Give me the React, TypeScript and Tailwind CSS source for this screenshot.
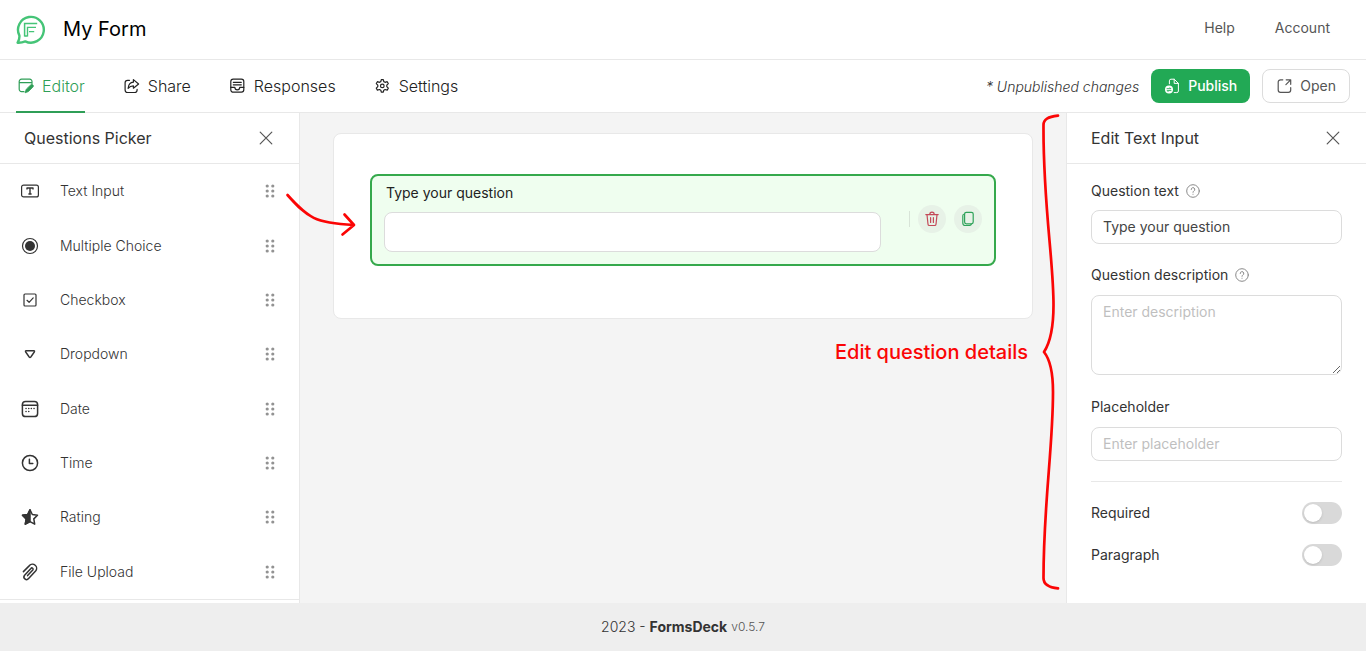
import { ReactNode } from "react";

type IconProps = { children: ReactNode; size?: 16 | 20; className?: string };

function Icon({ children, size = 16, className = "" }: IconProps) {
  return (
    <svg
      width={size}
      height={size}
      viewBox={`0 0 ${size} ${size}`}
      fill="none"
      stroke="currentColor"
      strokeWidth="1.2"
      strokeLinecap="round"
      strokeLinejoin="round"
      className={`shrink-0 ${className}`}
      aria-hidden="true"
    >
      {children}
    </svg>
  );
}

function Logo() {
  return (
    <svg width="30" height="30" viewBox="0 0 30 30" fill="none" stroke="#45c477" aria-hidden="true" className="shrink-0">
      <path d="M3.4 20.6 A12.9 12.9 0 1 1 9.3 26.4 Q5.6 27.9 1.6 27.7 Q3.7 24.6 3.4 20.6 Z" strokeWidth="2.4" strokeLinejoin="round" />
      <path d="M8.6 21.6 V8.6 H21.2" strokeWidth="1.5" />
      <path d="M11.5 21.6 V12.4 H20 M13 16.6 H18.2 M8.6 21 H11.5" strokeWidth="1.4" />
    </svg>
  );
}

const tabs = [
  {
    label: "Editor",
    active: true,
    icon: (
      <>
        <path d="M6 13.6 H3.5 A2.3 2.3 0 0 1 1.2 11.3 V3.5 A2.3 2.3 0 0 1 3.5 1.2 H11.7 A2.3 2.3 0 0 1 14 3.5 V5.4 M1.2 4.7 H14" />
        <path d="M12.7 6.9 A1.5 1.5 0 0 1 14.9 9.1 L10.4 13.6 L7 14.8 L8.2 11.4 Z" fill="currentColor" strokeWidth="0.8" />
      </>
    ),
  },
  {
    label: "Share",
    active: false,
    icon: (
      <>
        <path d="M5.5 2.3 H3.6 A2.5 2.5 0 0 0 1.1 4.8 V12 A2.5 2.5 0 0 0 3.6 14.5 H10.6 A2.5 2.5 0 0 0 13.1 12 V11.4" />
        <path d="M9.4 1.6 L14.6 6 L9.4 10.2 V7.9 C6.8 7.9 5.4 8.8 4.1 10.4 C4.4 6.8 6.2 4.5 9.4 4.2 Z" />
      </>
    ),
  },
  {
    label: "Responses",
    active: false,
    icon: (
      <>
        <rect x="0.8" y="1.2" width="13" height="13" rx="2.4" />
        <path d="M3.3 4.3 H11.3 M3.3 6.8 H11.3 M0.8 9.4 H4.9 A2.4 2.4 0 0 0 9.7 9.4 H13.8" />
      </>
    ),
  },
  {
    label: "Settings",
    active: false,
    icon: (
      <>
        <path d="M6.3 1.6 H8.3 L8.8 3.6 L10.1 4.3 L12.2 3.7 L13.3 5.6 L11.8 7.2 V8.6 L13.3 10.2 L12.2 12.1 L10.1 11.5 L8.8 12.2 L8.3 14.2 H6.3 L5.8 12.2 L4.5 11.5 L2.4 12.1 L1.3 10.2 L2.8 8.6 V7.2 L1.3 5.6 L2.4 3.7 L4.5 4.3 L5.8 3.6 Z" />
        <circle cx="7.3" cy="7.9" r="1.8" />
      </>
    ),
  },
];

const questionTypes = [
  {
    label: "Text Input",
    icon: (
      <>
        <rect x="1.6" y="4.1" width="16.8" height="11.8" rx="2" />
        <path d="M7 8.6 V7 H13 V8.6 M10 7 V13 M8.4 13 H11.6" strokeWidth="1.4" strokeLinecap="butt" />
      </>
    ),
  },
  {
    label: "Multiple Choice",
    icon: (
      <>
        <circle cx="10" cy="10" r="7.5" />
        <circle cx="10" cy="10" r="5" fill="currentColor" stroke="none" />
      </>
    ),
  },
  {
    label: "Checkbox",
    icon: (
      <>
        <rect x="4" y="4" width="12" height="12" rx="1" />
        <path d="M7 10.3 L9.1 12.3 L13.2 7.9" />
      </>
    ),
  },
  {
    label: "Dropdown",
    icon: <path d="M6.2 6.7 H13.8 Q15 6.9 14.3 8 L10.8 13 Q10 13.9 9.2 13 L5.7 8 Q5 6.9 6.2 6.7 Z" strokeWidth="1.4" />,
  },
  {
    label: "Date",
    icon: (
      <>
        <rect x="2.4" y="2.4" width="15.2" height="15.2" rx="3.2" strokeWidth="1.5" />
        <path d="M2.4 6.2 H17.6" strokeWidth="1.5" />
        <path d="M6 9.5 H6.1 M8.7 9.5 H8.8 M11.3 9.5 H11.4 M14 9.5 H14.1 M6 12.4 H6.1 M8.7 12.4 H8.8" strokeWidth="1.5" />
      </>
    ),
  },
  {
    label: "Time",
    icon: (
      <>
        <circle cx="10" cy="10" r="7.6" strokeWidth="1.5" />
        <path d="M9.4 6.2 V10.6 H12.8" strokeWidth="1.5" />
      </>
    ),
  },
  {
    label: "Rating",
    icon: (
      <>
        <path d="M10 2.8 L12.3 7.5 L17.5 8.2 L13.8 11.9 L14.7 17.2 L10 14.7 L5.3 17.2 L6.2 11.9 L2.5 8.2 L7.7 7.5 Z" strokeWidth="1.5" />
        <path d="M10 2.8 L7.7 7.5 L2.5 8.2 L6.2 11.9 L5.3 17.2 L10 14.7 Z" fill="currentColor" strokeWidth="1.5" />
      </>
    ),
  },
  {
    label: "File Upload",
    icon: (
      <path
        d="M3.4 9.6 L9.4 3.6 A4 4 0 0 1 15.6 9 L8.6 16.6 A2.6 2.6 0 0 1 4.6 13.2 L10.9 6.4 A1.2 1.2 0 0 1 12.8 8 L7.6 13.6"
        strokeWidth="1.5"
      />
    ),
  },
];

function CloseButton({ label }: { label: string }) {
  return (
    <button type="button" aria-label={label} className="flex size-5 items-center justify-center text-[#555]">
      <Icon>
        <path d="M2.2 2.2 L13.8 13.8 M13.8 2.2 L2.2 13.8" />
      </Icon>
    </button>
  );
}

function DragHandle() {
  return (
    <svg width="10" height="14" viewBox="0 0 10 14" fill="#929292" aria-hidden="true">
      {[2, 7, 12].map((y) => (
        <g key={y}>
          <circle cx="2.2" cy={y} r="1.6" />
          <circle cx="7.8" cy={y} r="1.6" />
        </g>
      ))}
    </svg>
  );
}

function HelpMark() {
  return (
    <svg width="14" height="14" viewBox="0 0 14 14" fill="none" stroke="#8a8a8a" strokeLinecap="round" aria-hidden="true">
      <circle cx="7" cy="7" r="6.3" strokeWidth="1" />
      <path d="M5.2 5.5 A1.8 1.8 0 1 1 7.7 7.1 Q7 7.5 7 8.3 M7 10.2 V10.3" strokeWidth="1" />
    </svg>
  );
}

function Toggle({ id, label }: { id: string; label: string }) {
  return (
    <div className="flex items-center justify-between">
      <label htmlFor={id} className="text-sm leading-5 text-[#333]">{label}</label>
      <input
        id={id}
        type="checkbox"
        role="switch"
        className="flex h-[22px] w-10 cursor-pointer appearance-none items-center rounded-full bg-[#d9d9d9] px-[2px] before:block before:size-[18px] before:rounded-full before:bg-white before:shadow before:content-[''] checked:justify-end checked:bg-[#22a955]"
      />
    </div>
  );
}

const fieldClass =
  "block w-full rounded-lg border border-[#dcdcdc] bg-white px-[11px] text-sm leading-5 text-[#444] placeholder:text-[#bfbfbf]";

export default function App() {
  return (
    <div className="flex min-h-screen flex-col bg-white font-['Inter','Liberation_Sans',sans-serif] text-[#333]">
      <header className="flex h-[60px] items-center justify-between border-b border-[#e8e8e8] pr-9 pl-4">
        <div className="flex items-center gap-[17px]">
          <Logo />
          <h1 className="pb-[2px] text-xl leading-7 text-black">My Form</h1>
        </div>
        <nav className="flex gap-10 pb-1 text-sm leading-5 text-[#555]">
          <a href="#help">Help</a>
          <a href="#account">Account</a>
        </nav>
      </header>

      <div className="flex h-[53px] items-center justify-between border-b border-[#e8e8e8] pr-4 pl-4">
        <nav className="flex h-[53px] gap-[37px]">
          {tabs.map((tab) => (
            <a
              key={tab.label}
              href={`#${tab.label.toLowerCase()}`}
              className={
                tab.active
                  ? "flex items-center gap-2 border-b-2 border-[#2f9e57] pt-[2px] pl-[2px] font-light text-[#2f9e57]"
                  : "flex items-center gap-2 border-b-2 border-transparent pt-[2px] pl-[2px] font-light text-[#222]"
              }
            >
              <Icon>{tab.icon}</Icon>
              <span>{tab.label}</span>
            </a>
          ))}
        </nav>
        <div className="flex items-center gap-3">
          <span className="pt-[2px] text-sm leading-5 font-light text-[#333] italic">* Unpublished changes</span>
          <button type="button" className="flex h-[34px] items-center gap-2 rounded-lg bg-[#22a955] px-[13px] text-sm font-medium text-white">
            <Icon>
              <path d="M5.4 5.8 V2.8 A1.6 1.6 0 0 1 7 1.2 H10.2 L14.4 5.4 V13 A1.6 1.6 0 0 1 12.8 14.6 H10.2 M10.2 1.2 V5.4 H14.4" strokeWidth="1" />
              <circle cx="5" cy="11.6" r="4" fill="currentColor" stroke="none" />
              <path d="M3 10.7 H6.9 L6 9.8 M7 12.6 H3.1 L4 13.5" stroke="#22a955" strokeWidth="0.9" />
            </Icon>
            Publish
          </button>
          <button type="button" className="flex h-[34px] items-center gap-2 rounded-lg border border-[#dcdcdc] bg-white px-[13px] text-sm text-[#555]">
            <Icon>
              <path d="M6.8 1.8 H4.5 A2.3 2.3 0 0 0 2.2 4.1 V12 A2.3 2.3 0 0 0 4.5 14.3 H12.4 A2.3 2.3 0 0 0 14.7 12 V9.5 M10.2 1.8 H14.7 V6.3 M14.4 2.1 L9.9 6.6" />
            </Icon>
            Open
          </button>
        </div>
      </div>

      <div className="flex flex-1">
        <aside className="relative z-10 flex w-[300px] shrink-0 flex-col border-r border-[#e8e8e8]">
          <div className="flex h-[51px] items-center justify-between border-b border-[#e8e8e8] pr-[23px] pl-6">
            <h2 className="text-base leading-6">Questions Picker</h2>
            <CloseButton label="Close questions picker" />
          </div>
          <ul className="mb-[3px] flex flex-1 flex-col border-b border-[#e8e8e8]">
            {questionTypes.map((type) => (
              <li key={type.label} className="flex flex-1 items-center pr-6 pl-5">
                <Icon size={20}>{type.icon}</Icon>
                <span className="ml-5 flex-1 text-sm leading-5 font-light">{type.label}</span>
                <DragHandle />
              </li>
            ))}
          </ul>
          <svg
            className="pointer-events-none absolute top-[77px] left-[284px]"
            width="74"
            height="50"
            viewBox="0 0 74 50"
            fill="none"
            stroke="#fb0505"
            strokeWidth="2.7"
            strokeLinecap="round"
            strokeLinejoin="round"
            aria-hidden="true"
          >
            <path d="M3.5 5 C24 28 31 33 69.5 35 M60.5 24.5 L70 35 L58.5 44.5" />
          </svg>
        </aside>

        <main className="relative flex-1 bg-[#f4f4f4] px-8 pt-5">
          <section className="mx-auto max-w-[700px] rounded-lg border border-[#e8e8e8] bg-white px-9 pt-10 pb-[52px]">
            <div className="flex items-center rounded-lg border-2 border-[#35a94c] bg-[#effeef] px-3 pt-[7px] pb-3">
              <div className="flex flex-1 flex-col gap-[9px]">
                <label htmlFor="answer" className="pl-[2px] text-sm leading-5 text-[#222]">Type your question</label>
                <input id="answer" type="text" className="h-10 w-full rounded-lg border border-[#dcdcdc] bg-white px-3 text-sm" />
              </div>
              <div className="ml-7 flex items-center gap-2 pt-[2px]">
                <span className="h-4 w-px bg-[#d8e4d8]" />
                <button type="button" aria-label="Delete question" className="flex size-7 items-center justify-center rounded-full bg-[#e7f2e7] text-[#c44a59]">
                  <Icon>
                    <path d="M1.8 3.6 H14.2 M5.8 3.4 A2.2 2.2 0 0 1 10.2 3.4 M3 3.8 L4 13.2 A1.4 1.4 0 0 0 5.4 14.5 H10.6 A1.4 1.4 0 0 0 12 13.2 L13 3.8 M6.6 6.7 V11.5 M9.4 6.7 V11.5" />
                  </Icon>
                </button>
                <button type="button" aria-label="Duplicate question" className="flex size-7 items-center justify-center rounded-full bg-[#e7f2e7] text-[#2fa35a]">
                  <Icon>
                    <rect x="4.6" y="1.4" width="8.6" height="11.4" rx="1.7" />
                    <path d="M4.4 3 A1.7 1.7 0 0 0 2.8 4.7 V12 A2.5 2.5 0 0 0 5.3 14.5 H9.8 A1.7 1.7 0 0 0 11.3 13.2" />
                  </Icon>
                </button>
              </div>
            </div>
          </section>
          <p className="absolute top-[225px] right-[38px] text-xl leading-7 font-medium text-[#fb0505]">Edit question details</p>
          <svg
            className="pointer-events-none absolute top-0 right-0"
            width="26"
            height="480"
            viewBox="0 0 26 480"
            fill="none"
            stroke="#fb0505"
            strokeWidth="2.7"
            strokeLinecap="round"
            strokeLinejoin="round"
            aria-hidden="true"
          >
            <path d="M18 2.7 C8 4 3.5 6 3.5 12 C3 92 13.5 145 13.5 192 C13.5 213 10.5 229 4 239 C10.5 247 13 259 13 279 C13 335 3.5 390 3.5 465 Q3.5 474 18 475.3" />
          </svg>
        </main>

        <aside className="w-[300px] shrink-0 border-l border-[#e8e8e8]">
          <div className="flex h-[51px] items-center justify-between border-b border-[#e8e8e8] pr-[23px] pl-6">
            <h2 className="text-base leading-6">Edit Text Input</h2>
            <CloseButton label="Close editing panel" />
          </div>
          <form className="px-6 pt-[17px]">
            <div className="mb-[21px]">
              <div className="mb-[9px] flex items-center gap-[7px]">
                <label htmlFor="question-text" className="text-sm leading-5">Question text</label>
                <HelpMark />
              </div>
              <input id="question-text" type="text" defaultValue="Type your question" className={`h-[34px] pb-[2px] ${fieldClass}`} />
            </div>
            <div className="mb-[22px]">
              <div className="mb-[10px] flex items-center gap-[7px]">
                <label htmlFor="question-description" className="text-sm leading-5">Question description</label>
                <HelpMark />
              </div>
              <textarea id="question-description" placeholder="Enter description" className={`h-20 resize-y py-[6px] ${fieldClass}`} />
            </div>
            <div className="mb-5 border-b border-[#e8e8e8] pb-5">
              <label htmlFor="placeholder" className="mb-[10px] block text-sm leading-5">Placeholder</label>
              <input id="placeholder" type="text" placeholder="Enter placeholder" className={`h-[34px] pb-[2px] ${fieldClass}`} />
            </div>
            <div className="flex flex-col gap-5">
              <Toggle id="required" label="Required" />
              <Toggle id="paragraph" label="Paragraph" />
            </div>
          </form>
        </aside>
      </div>

      <footer className="flex h-12 items-center justify-center gap-1 bg-[#eee] text-sm">
        <span className="font-light">2023 - <strong className="font-bold">FormsDeck</strong></span>
        <span className="text-xs font-light text-[#555]">v0.5.7</span>
      </footer>
    </div>
  );
}
